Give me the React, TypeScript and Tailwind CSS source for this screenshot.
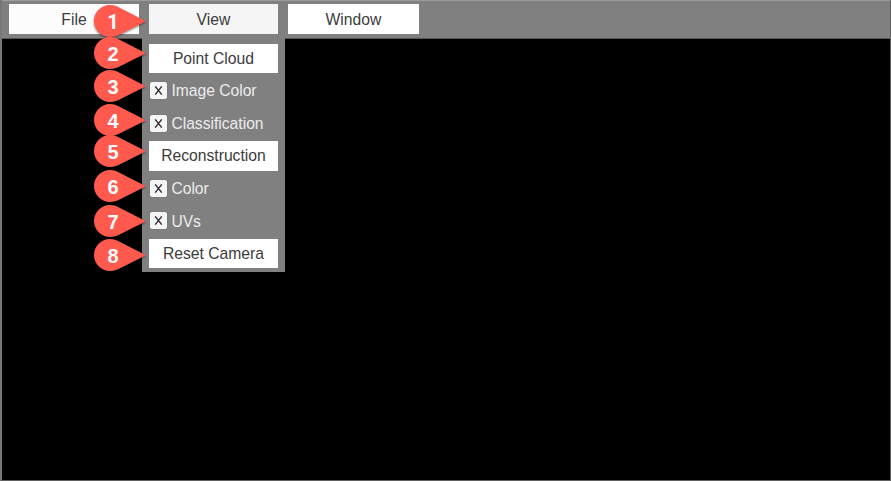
import React from "react";

const pins = [5, 37, 70, 104, 135, 170, 205, 239];

const buttonClass =
  "flex h-[29.5px] shrink-0 items-center justify-center whitespace-nowrap text-[15.7px] leading-none text-[#3c3c3c]";

function Toggle({ label }: { label: string }) {
  return (
    <label className="flex h-[29.5px] items-center pl-[1.5px] text-[15.65px] leading-none text-[#ececec]">
      <span className="mr-[4.4px] flex h-[17px] w-[17px] items-center justify-center rounded-[2px] bg-[#f5f5f5] shadow-[0_0_1px_#555]">
        <svg width="9" height="9" viewBox="0 0 9 9" fill="none" stroke="#323232" strokeWidth="1.45">
          <path d="M1.2 .4 7.8 8.6M7.8 .4 1.2 8.6" />
        </svg>
      </span>
      <span className="pt-px">{label}</span>
    </label>
  );
}

function Pin({ number, top }: { number: number; top: number }) {
  return (
    <div className="absolute left-[94px] h-8 w-[53px]" style={{ top }}>
      <svg className="absolute inset-0 overflow-visible drop-shadow-[0_1px_1px_rgba(0,0,0,0.5)]" width="53" height="32" viewBox="0 0 53 32">
        <path
          d="M52 16.2 26 2.9C22.5 1.1 20 0 16 0A16 16 0 0 0 16 32C20 32 22.5 31 26 29.2Z"
          fill="#ff5a4d"
        />
      </svg>
      <span
        className={`absolute left-0 top-[6px] w-[38px] text-center text-[20px] font-bold leading-[22px] text-white ${
          number === 1 ? "font-['Roboto',sans-serif]" : ""
        }`}
      >
        {number}
      </span>
    </div>
  );
}

export default function App() {
  return (
    <div className="relative flex h-[481px] w-[891px] flex-col overflow-hidden border-b border-l-2 border-r border-b-[#606060] border-l-[#777] border-r-[#606060] bg-black font-['Liberation_Sans',Arial,sans-serif]">
      <header className="flex h-[38.5px] shrink-0 gap-[9.5px] border-b border-t border-b-[#555] border-t-[#9b9b9b] bg-[#808080] pl-[7px] pt-[3px]">
        <button className={`${buttonClass} w-[130px] bg-[#fcfcfc] pt-[2px]`}>File</button>
        <button className={`${buttonClass} w-[129.9px] bg-[#f5f5f5] pt-[2px]`}>View</button>
        <button className={`${buttonClass} w-[131px] bg-white pt-[2px]`}>Window</button>
      </header>
      <nav className="-mt-px ml-[140px] flex h-[234.5px] w-[143px] flex-col gap-[3.05px] bg-[#808080] pl-[6.5px] pt-[6px]">
        <button className={`${buttonClass} w-[129.9px] bg-white pt-px`}>Point Cloud</button>
        <Toggle label="Image Color" />
        <Toggle label="Classification" />
        <button className={`${buttonClass} w-[129.9px] bg-white`}>Reconstruction</button>
        <Toggle label="Color" />
        <Toggle label="UVs" />
        <button className={`${buttonClass} w-[129.9px] bg-white`}>Reset Camera</button>
      </nav>
      <div className="absolute -left-[2px] top-0">
        {pins.map((top, index) => (
          <Pin key={top} number={index + 1} top={top} />
        ))}
      </div>
    </div>
  );
}
